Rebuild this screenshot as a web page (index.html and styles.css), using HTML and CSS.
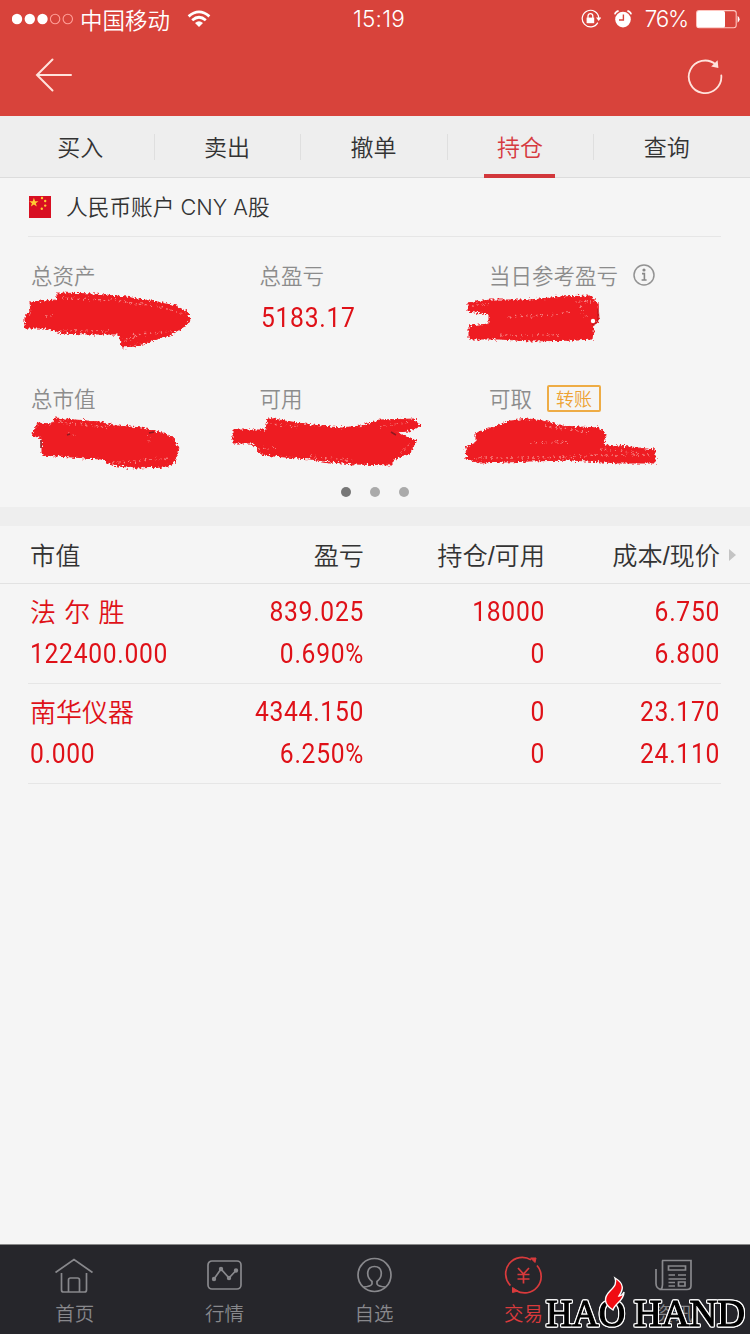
FILE: index.html
```html
<!DOCTYPE html>
<html lang="zh-CN">
<head>
    <meta charset="UTF-8">
    <meta name="viewport" content="width=device-width, initial-scale=1.0">
    <title>持仓</title>
    <link rel="stylesheet" href="styles.css">
</head>
<body>

    <header class="header">
        <div class="status">
            <div class="status-left">
                <svg class="signal" width="62" height="12" viewBox="0 0 62 12">
                    <g fill="#fff">
                        <circle cx="5" cy="6" r="5.2"/>
                        <circle cx="17.8" cy="6" r="5.2"/>
                        <circle cx="30.5" cy="6" r="5.2"/>
                    </g>
                    <g fill="none" stroke="#ff9f98" stroke-width="1.1">
                        <circle cx="43.1" cy="6" r="4.7"/>
                        <circle cx="55.8" cy="6" r="4.7"/>
                    </g>
                </svg>
                <span class="carrier">中国移动</span>
                <svg class="wifi" width="24" height="18" viewBox="0 0 24 18" fill="none" stroke="#fff" stroke-width="2.8">
                    <path d="M1.6 6.4Q12 -2.6 22.4 6.4"/>
                    <path d="M5.2 10.2Q12 4.4 18.8 10.2"/>
                    <path d="M12 17L8 13Q12 9.6 16 13Z" fill="#fff" stroke="none"/>
                </svg>
            </div>
            <div class="clock">15:19</div>
            <div class="status-right">
                <svg width="20" height="20" viewBox="0 0 20 20">
                    <path d="M16.8 13.6A8.3 8.3 0 1 1 17.8 9" fill="none" stroke="#fff" stroke-width="1.2"/>
                    <path d="M15 8.6H20.4L17.7 12Z" fill="#fff"/>
                    <rect x="5.6" y="8.6" width="7.6" height="5.6" fill="#fff"/>
                    <path d="M7 9V7A2.4 2.4 0 0 1 11.8 7V9" fill="none" stroke="#fff" stroke-width="1.3"/>
                </svg>
                <svg width="18" height="18" viewBox="0 0 18 18">
                    <circle cx="9" cy="9.6" r="7.8" fill="#fff"/>
                    <path d="M.8 4.4Q1.6 1.6 4.6 .9M17.2 4.4Q16.4 1.6 13.4 .9" fill="none" stroke="#fff" stroke-width="1.6"/>
                    <path d="M9.4 4.6V10H5" fill="none" stroke="#d8433b" stroke-width="1.4"/>
                </svg>
                <span class="percent">76%</span>
                <svg class="battery" width="45" height="19" viewBox="0 0 45 19">
                    <rect x=".6" y=".6" width="39.6" height="17.2" rx="2.5" fill="none" stroke="#ffc6c0" stroke-width="1.1"/>
                    <rect x="1" y="1" width="28" height="16.4" rx="1.5" fill="#fff"/>
                    <path d="M41.6 5.8Q45.6 9.2 41.6 12.8Z" fill="#fff"/>
                </svg>
            </div>
        </div>
        <div class="navbar">
            <svg width="38" height="34" viewBox="0 0 38 34" fill="none" stroke="#ffe3dc" stroke-width="2" stroke-linecap="round">
                <path d="M17.5 1.5L2 17L17.5 32.5M2 17H36"/>
            </svg>
            <svg class="refresh" width="36" height="36" viewBox="0 0 36 36">
                <path d="M34.3 16.5A16.3 16.3 0 1 1 28.6 5.4" fill="none" stroke="#ffe3dc" stroke-width="1.8" stroke-linecap="round"/>
                <path d="M30.6 1.2L31.4 9L24.2 7.6Z" fill="#ffe3dc"/>
            </svg>
        </div>
    </header>

    <nav class="tabs">
        <a class="tab">买入</a>
        <a class="tab">卖出</a>
        <a class="tab">撤单</a>
        <a class="tab activa">持仓</a>
        <a class="tab">查询</a>
    </nav>

    <section class="account">
        <svg width="22" height="22" viewBox="0 0 22 22">
            <rect width="22" height="22" fill="#d80f22"/>
            <g fill="#fc3">
                <path d="M4.9 1.8L6.1 5.2H9.5L6.8 7.3L7.8 10.6L4.9 8.6L1.9 10.6L2.9 7.3L.2 5.2H3.7Z"/>
                <circle cx="13" cy="2" r="1.2"/>
                <circle cx="16.2" cy="5" r="1.2"/>
                <circle cx="16.2" cy="9.6" r="1.2"/>
                <circle cx="12.8" cy="12.8" r="1.2"/>
            </g>
        </svg>
        <span class="account-name">人民币账户 CNY A股</span>
    </section>

    <section class="summary">
        <div class="cell"><span class="label">总资产</span></div>
        <div class="cell"><span class="label">总盈亏</span><span class="amount">5183.17</span></div>
        <div class="cell">
            <span class="label">当日参考盈亏
                <svg class="info" width="22" height="22" viewBox="0 0 22 22">
                    <circle cx="11" cy="11" r="10" fill="none" stroke="#939393" stroke-width="1.5"/>
                    <circle cx="11" cy="6" r="1.6" fill="#888"/>
                    <path d="M9 9.6H11.4V15.6M8.6 16H13.6" fill="none" stroke="#888" stroke-width="1.6"/>
                </svg>
            </span>
        </div>
        <div class="cell"><span class="label">总市值</span></div>
        <div class="cell"><span class="label">可用</span></div>
        <div class="cell"><span class="label">可取<b class="transfer">转账</b></span></div>

        <!-- marcador rojo sobre los importes -->
        <svg class="marker" width="750" height="270" viewBox="0 237 750 270">
            <defs>
                <filter id="rough" x="-5%" y="-10%" width="110%" height="120%">
                    <feTurbulence type="fractalNoise" baseFrequency=".45" numOctaves="2" seed="4" result="n"/>
                    <feDisplacementMap in="SourceGraphic" in2="n" scale="6" xChannelSelector="R" yChannelSelector="G"/>
                    <feGaussianBlur stdDeviation=".45"/>
                </filter>
            </defs>
            <g fill="#ee1c23" stroke="#ee1c23" stroke-width="1" filter="url(#rough)">
                <path d="M57 293L95 294L126 297L157 302L176 306L187 312L190 319L185 327L170 335L148 342L135 346L122 347L119 334L88 334L62 333L45 328L25 328V316L31 314L30 302L57 300Z"/>
                <path d="M55 418L75 420L100 422L118 426L142 428L160 432L173 438L179 449L174 463L165 467L135 468L112 465L101 459L42 455V438L32 435L38 423L52 424Z"/>
                <path d="M268 418L285 421L312 425L340 428L362 426L380 420L414 419L420 426L408 431L396 432L416 441L410 453L392 460V465L355 464L330 462L310 459L285 457L262 455L255 447L253 443H233V430H266Z"/>
                <path d="M468 303L490 300L530 300L560 297L590 296L598 303L599 319L594 325L592 339L577 340L530 341L500 339L469 339V326L489 324V314L468 311Z"/>
                <path d="M510 421L530 419L549 422L560 426L598 428L606 434L604 445L630 447L655 450V463L620 463L570 460L530 461L480 463L467 459L466 447L476 443V433L498 426Z"/>
            </g>
            <g fill="none" stroke="#f79a98" stroke-width="1.6" stroke-dasharray="1.5 3 2 4" opacity=".8" filter="url(#rough)">
                <path d="M62 298L110 300L160 307L184 314M125 340L140 334L175 331M132 333L136 343M46 316H56M60 331H112"/>
                <path d="M60 422L112 428M68 434L78 437M150 436L149 446M113 462L140 461L170 458"/>
                <path d="M270 424L300 427M258 449L276 447M310 456L355 461M380 427L410 422M400 452L412 443"/>
                <path d="M472 306L490 303M505 317L550 315L570 312M575 301L592 302M581 306L586 320M500 335H560"/>
                <path d="M475 458H540L600 455H650M530 443L570 442M545 426L590 433M600 449L640 453"/>
            </g>
            <g fill="none" stroke="#8d1a20" stroke-width="1.5">
                <path d="M67 435L70 434M149 433L154 432M41 440V448M391 432L396 435"/>
                <path d="M598 309V319Q597 325 592 324" stroke="#c2151b"/>
            </g>
            <circle cx="593" cy="321" r="2.2" fill="#fff"/>
        </svg>
    </section>

    <div class="dots">
        <i class="dot actual"></i>
        <i class="dot"></i>
        <i class="dot"></i>
    </div>

    <section class="holdings">
        <div class="row titles">
            <span>市值</span>
            <span>盈亏</span>
            <span>持仓/可用</span>
            <span>成本/现价</span>
            <i class="arrow"></i>
        </div>
        <div class="row stock">
            <span class="name">法 尔 胜</span>
            <span>839.025</span>
            <span>18000</span>
            <span>6.750</span>
            <span>122400.000</span>
            <span>0.690%</span>
            <span>0</span>
            <span>6.800</span>
        </div>
        <div class="row stock">
            <span class="name">南华仪器</span>
            <span>4344.150</span>
            <span>0</span>
            <span>23.170</span>
            <span>0.000</span>
            <span>6.250%</span>
            <span>0</span>
            <span>24.110</span>
        </div>
    </section>

    <footer class="bottom">
        <a class="item">
            <svg width="40" height="38" viewBox="0 0 40 38">
                <path d="M.5 16.500L19 3.500L37.500 16.500M6.500 17V34Q6.500 36 8.500 36H29.500Q31.500 36 31.500 34V17M13.500 36V24Q13.500 22 15.500 22H22.500Q24.500 22 24.500 24V36"/>
            </svg>
            首页
        </a>
        <a class="item">
            <svg width="40" height="38" viewBox="0 0 40 38">
                <rect x="4" y="5" width="33" height="28" rx="4"/>
                <path d="M10 23L17 13L25 22L32 14.500"/>
                <g fill="#88888c" stroke="none">
                    <circle cx="10" cy="23" r="2.200"/>
                    <circle cx="17" cy="13" r="2.200"/>
                    <circle cx="25" cy="22" r="2.200"/>
                    <circle cx="32" cy="14.500" r="2.200"/>
                </g>
            </svg>
            行情
        </a>
        <a class="item">
            <svg width="40" height="38" viewBox="0 0 40 38">
                <circle cx="20.500" cy="19" r="16.500"/>
                <path d="M9.500 31Q17 30.500 18 28V25.500C11.500 20.500 12.500 10.500 20.500 10.500S29.500 20.500 23 25.500V28Q24 30.500 31.500 31"/>
            </svg>
            自选
        </a>
        <a class="item activa">
            <svg width="40" height="38" viewBox="0 0 40 38">
                <path d="M6.500 29.500A16.500 16.500 0 0 1 27 3.900M33 9.500A16.500 16.500 0 0 1 12 34.500"/>
                <path d="M26.500 2L31 6.500L32 2ZM8.500 31.500L8.500 36.500L14 35Z" fill="#d93a3c" stroke-width="1"/>
                <path d="M14 12L19.500 18L25 12M19.500 18V27.500M13.500 18.500H25.500M13.500 23H25.500"/>
            </svg>
            交易
        </a>
        <a class="item">
            <svg width="40" height="38" viewBox="0 0 40 38">
                <path d="M9 33.500Q3 33 3 27.500V13M9 4.500H38V29.500Q38 33.500 34 33.500H8Q9.500 31.500 9.500 28.500V4.500"/>
                <path d="M15.500 10H32.500V14H15.500ZM25.500 26H32V30H25.500ZM15.500 19H22M25 19H33M15.500 23H33M15.500 26.500H22M15.500 30H22"/>
            </svg>
            资讯
        </a>
        <svg class="watermark" width="210" height="62" viewBox="0 0 210 62">
            <g class="brand">
                <text x="6" y="54" textLength="79" lengthAdjust="spacingAndGlyphs">HAO</text>
                <text x="94" y="54" textLength="111" lengthAdjust="spacingAndGlyphs">HAND</text>
            </g>
            <path d="M75 6C85 12 83 18 79 24C81 24 83 22 84 20C84 29 75 31 73 38C63 32 64 25 70 19C75 14 77 11 75 6Z" fill="#f00c12" stroke="#fff" stroke-width="1.4"/>
        </svg>
    </footer>

</body>
</html>
```
FILE: styles.css
```css
* {
    box-sizing: border-box;
}

body {
    margin: 0;
    width: 750px;
    height: 1334px;
    display: flex;
    flex-direction: column;
    overflow: hidden;
    background: #f5f5f5;
    color: #333;
    font-family: 'Noto Sans CJK SC', sans-serif;
    font-weight: 350;
}

svg {
    display: block;
    flex: none;
}

/* Cabecera */
.header {
    height: 116px;
    background: #d8433b;
    color: #fff;
}

.status {
    height: 38px;
    display: grid;
    grid-template-columns: 1fr auto 1fr;
    align-items: center;
    padding: 0 9px 0 12px;
}

.status-left,
.status-right {
    display: flex;
    align-items: center;
}

.carrier {
    font-size: 22.5px;
    line-height: 36px;
    margin: 0 17px 0 6px;
}

.clock,
.percent {
    font-family: Inter, sans-serif;
    font-weight: 300;
    font-size: 22.5px;
    letter-spacing: 0.2px;
    line-height: 36px;
}

.clock {
    margin-left: 5px;
}

.status-right {
    justify-content: flex-end;
}

.status-right svg + svg {
    margin-left: 13px;
}

.percent {
    letter-spacing: -1.2px;
    margin: 0 8px 0 13px;
}

.navbar {
    display: flex;
    justify-content: space-between;
    align-items: center;
    height: 73px;
    padding: 0 27px 0 35px;
}

.refresh {
    margin-top: 4px;
}

/* Pestañas */
.tabs {
    height: 62px;
    display: flex;
    padding: 0 10px 0 7px;
    background: #eee;
    border-bottom: 1px solid #dcdcdc;
}

.tab {
    flex: 1;
    position: relative;
    text-align: center;
    font-size: 23px;
    line-height: 61px;
}

.tab + .tab::before {
    content: '';
    position: absolute;
    left: 0;
    top: 18px;
    width: 1px;
    height: 26px;
    background: #dfdfdf;
}

.tab.activa {
    color: #d63a3f;
}

.tab.activa::after {
    content: '';
    position: absolute;
    left: 37px;
    bottom: -1px;
    width: 71px;
    height: 4px;
    background: #d2373b;
}

.account {
    height: 59px;
    margin: 0 29px 0 28px;
    padding-left: 1px;
    display: flex;
    align-items: center;
    gap: 15px;
    border-bottom: 1px solid #e6e6e6;
}

.account-name {
    font-family: Inter, 'Noto Sans CJK SC', sans-serif;
    font-size: 21.7px;
    padding-bottom: 3px;
}

/* Resumen */
.summary {
    position: relative;
    height: 243px;
    display: grid;
    grid-template-columns: 228.5px 229.5px 1fr;
    grid-template-rows: 123px 120px;
    padding: 23px 0 0 31px;
}

.cell {
    display: flex;
    flex-direction: column;
    align-items: flex-start;
}

.label {
    display: flex;
    align-items: center;
    font-size: 21.5px;
    line-height: 30px;
    color: #8c8c8c;
}

.info {
    margin-left: 15px;
}

.transfer {
    margin-left: 15px;
    width: 54px;
    height: 27px;
    border: 2px solid #eeac45;
    border-radius: 2px;
    color: #eda232;
    font-size: 18px;
    font-weight: 350;
    line-height: 22px;
    text-align: center;
}

.amount,
.stock {
    font-family: Roboto, 'Noto Sans CJK SC', sans-serif;
    font-weight: 400;
    font-size: 28px;
    letter-spacing: 0.8px;
    color: #df1118;
}

/* Cifras estrechas */
.amount,
.stock span:not(.name) {
    transform: scaleX(0.88);
    transform-origin: right;
}

.amount {
    line-height: 34px;
    margin: 11px 0 0 1px;
    transform-origin: left;
}

.stock span:nth-child(5) {
    transform-origin: left;
}

.marker {
    position: absolute;
    left: 0;
    top: 0;
}

.dots {
    height: 27px;
    display: flex;
    justify-content: center;
    gap: 19px;
    padding-top: 7px;
}

.dot {
    width: 10px;
    height: 10px;
    border-radius: 50%;
    background: #aaa;
}

.dot.actual {
    background: #777;
}

/* Tabla de posiciones */
.holdings {
    border-top: 19px solid #eee;
}

.row {
    display: grid;
    grid-template-columns: 140px 194px 181px 175px;
    text-align: right;
}

.row span:nth-child(4n + 1) {
    text-align: left;
}

.titles {
    position: relative;
    height: 58px;
    padding-left: 30px;
    font-family: 'Liberation Sans', 'Noto Sans CJK SC', sans-serif;
    font-size: 25.2px;
    line-height: 60px;
    border-bottom: 1px solid #e2e2e2;
}

.arrow {
    position: absolute;
    left: 729px;
    top: 23px;
    border-left: 7px solid #c4c4c4;
    border-top: 6px solid transparent;
    border-bottom: 6px solid transparent;
}

.stock {
    height: 100px;
    margin: 0 29px 0 28px;
    padding: 6px 0 0 2px;
    grid-template-rows: 42px 42px;
    line-height: 43px;
    border-bottom: 1px solid #e6e6e6;
}

.stock .name {
    font-family: 'Noto Sans CJK SC', sans-serif;
    font-weight: 350;
    font-size: 26px;
    line-height: 41px;
    letter-spacing: 0;
    word-spacing: 2.5px;
    white-space: nowrap;
}

/* Barra inferior */
.bottom {
    position: relative;
    margin-top: auto;
    height: 90px;
    display: flex;
    background: #26262b;
    border-top: 1px solid #888;
}

.item {
    width: 149.6px;
    display: flex;
    flex-direction: column;
    align-items: center;
    padding-top: 11px;
    font-size: 19.5px;
    line-height: 37px;
    color: #88888c;
}

.item svg {
    fill: none;
    stroke: #88888c;
    stroke-width: 1.7;
}

.item.activa {
    color: #d93a3c;
}

.item.activa svg {
    stroke: #d93a3c;
}

.watermark {
    position: absolute;
    right: 0;
    bottom: 0;
}

.brand {
    font-family: 'Liberation Serif', serif;
    font-size: 38px;
    font-weight: 400;
    fill: #000;
    stroke: #000;
    stroke-width: 1.1;
    filter: drop-shadow(1px 0 0 #fff) drop-shadow(-1px 0 0 #fff) drop-shadow(0 1px 0 #fff) drop-shadow(0 -1px 0 #fff);
}
```
